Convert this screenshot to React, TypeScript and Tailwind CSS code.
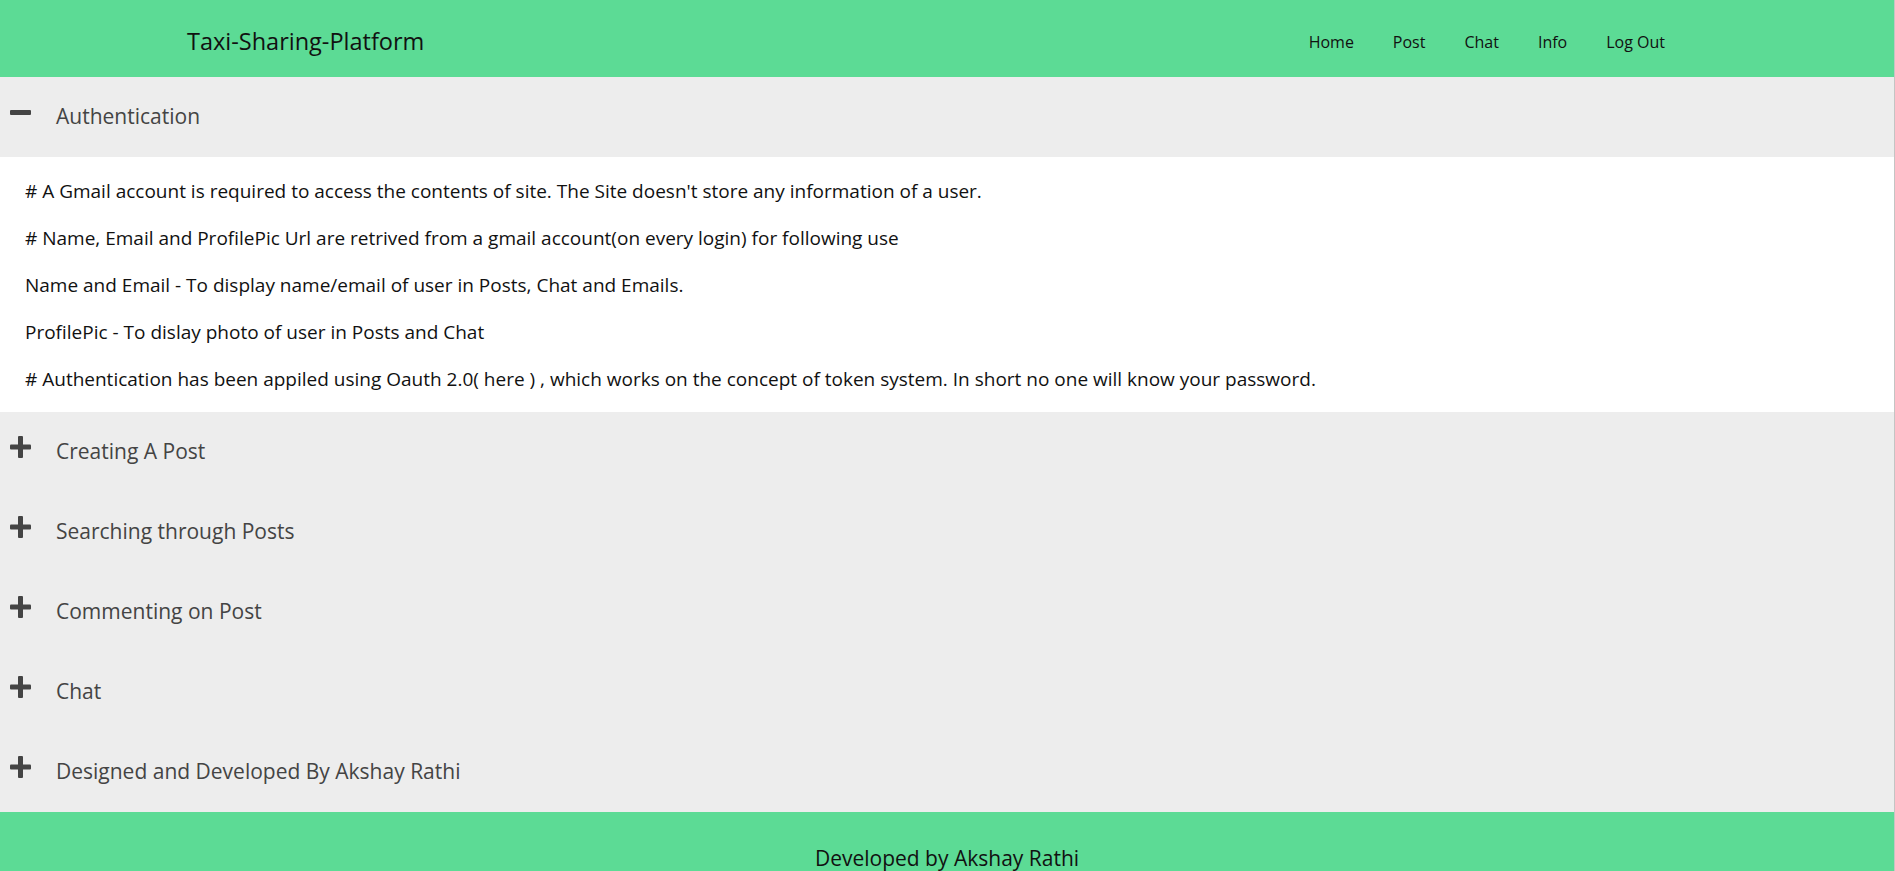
const navLinks = ["Home", "Post", "Chat", "Info", "Log Out"];

const sections = [
  "Creating A Post",
  "Searching through Posts",
  "Commenting on Post",
  "Chat",
  "Designed and Developed By Akshay Rathi",
];

const authLines = [
  "# A Gmail account is required to access the contents of site. The Site doesn't store any information of a user.",
  "# Name, Email and ProfilePic Url are retrived from a gmail account(on every login) for following use",
  "Name and Email - To display name/email of user in Posts, Chat and Emails.",
  "ProfilePic - To dislay photo of user in Posts and Chat",
  "# Authentication has been appiled using Oauth 2.0( here ) , which works on the concept of token system. In short no one will know your password.",
];

const PlusIcon = () => (
  <svg width="21" height="22" viewBox="0 0 21 22" className="block">
    <rect x="0" y="8.5" width="21" height="5" rx="1" fill="#444" />
    <rect x="8" y="0" width="5" height="22" rx="1" fill="#444" />
  </svg>
);

const MinusIcon = () => (
  <svg width="21" height="5" viewBox="0 0 21 5" className="block">
    <rect x="0" y="0" width="21" height="5" rx="1" fill="#444" />
  </svg>
);

const AccordionRow = ({ title, open }: { title: string; open?: boolean }) => (
  <div className="h-[80px] flex items-center pl-[10px] cursor-pointer">
    <div className="w-[21px] flex justify-center -translate-y-[5px]">
      {open ? <MinusIcon /> : <PlusIcon />}
    </div>
    <span className="ml-[25px] text-[21px] text-[#444]">{title}</span>
  </div>
);

export default function App() {
  return (
    <div className="min-h-screen w-full border-r border-[#c4c4c4] font-['Open_Sans',sans-serif] overflow-hidden">
      <header className="h-[77px] bg-[#5cdb95] flex items-center pt-[6px] pl-[187px] pr-[229px]">
        <h1 className="text-[23.5px] text-[#111]">Taxi-Sharing-Platform</h1>
        <nav className="ml-auto flex gap-[39px] text-[16px] text-[#111]">
          {navLinks.map((link) => (
            <a key={link} href="#">
              {link}
            </a>
          ))}
        </nav>
      </header>

      <div className="bg-[#ededed]">
        <AccordionRow title="Authentication" open />
        <div className="bg-white pt-[21px] pb-[19px] pl-[25px] flex flex-col gap-[20px] text-[19px] leading-[27px] text-[#111]">
          {authLines.map((line, i) => (
            <p key={i}>{line}</p>
          ))}
        </div>
        {sections.map((title) => (
          <AccordionRow key={title} title={title} />
        ))}
      </div>

      <footer className="bg-[#5cdb95] h-[80px] pt-[34px] text-center text-[21px] leading-[24px] text-[#111]">
        Developed by Akshay Rathi
      </footer>
    </div>
  );
}
